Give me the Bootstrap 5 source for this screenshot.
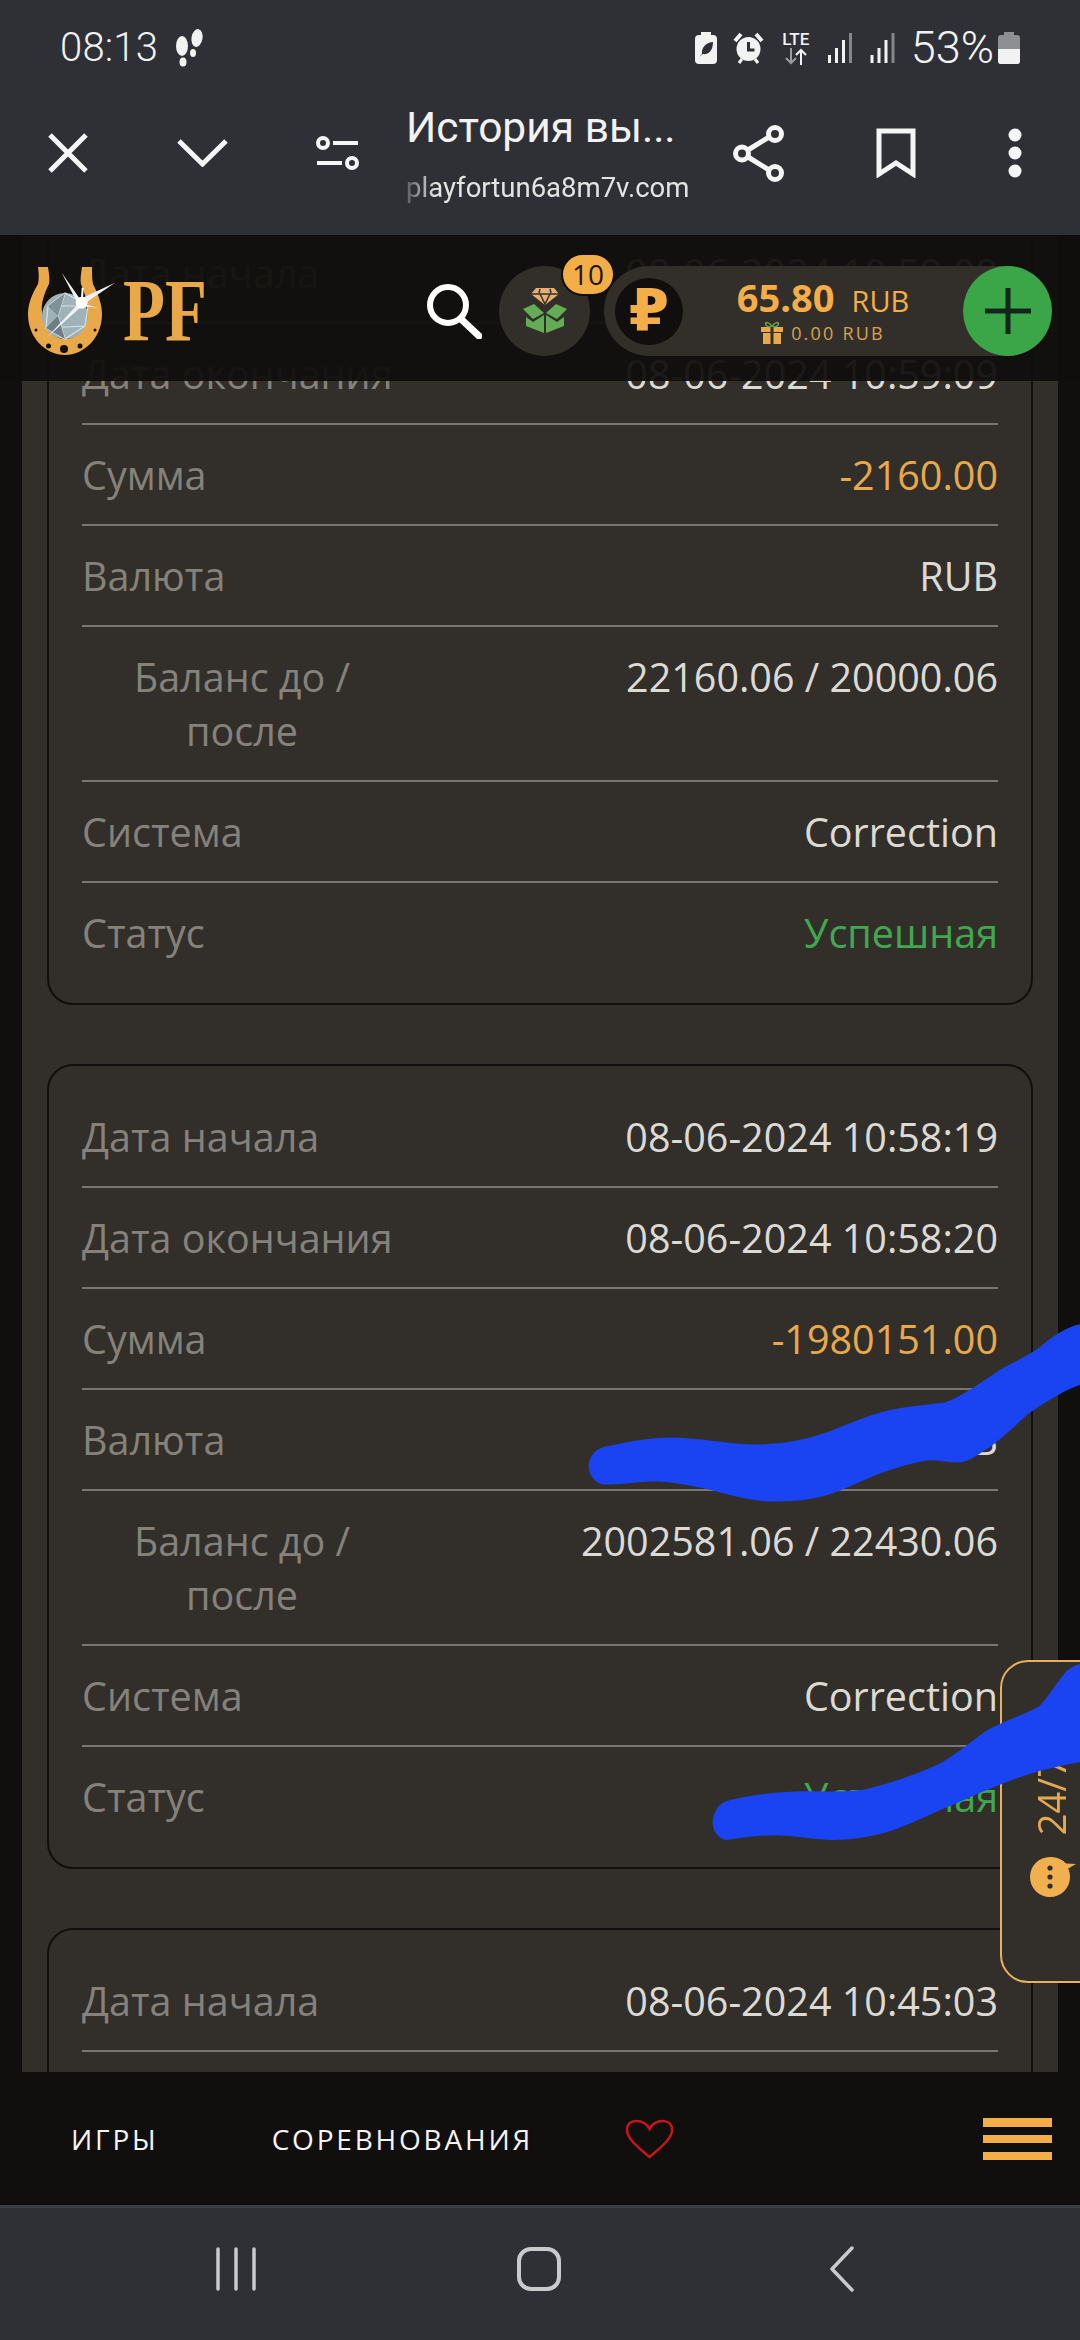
<!DOCTYPE html>
<html lang="ru">
<head>
    <meta charset="UTF-8">
    <meta name="viewport" content="width=device-width, initial-scale=1.0">
    <title>История выводов</title>
    <link href="https://cdn.jsdelivr.net/npm/bootstrap@5.3.0/dist/css/bootstrap.min.css" rel="stylesheet">
    <style>
        html, body { background: #110f0d; }
        body { width: 1080px; height: 2340px; overflow: hidden; font-family: "Open Sans", sans-serif; }
        .phone { position: relative; width: 1080px; height: 2340px; overflow: hidden; }

        /* android + browser chrome */
        .chrome { height: 235px; background: #2f3035; color: #f2f2f2; font-family: Roboto, sans-serif; }
        .status-row { height: 96px; padding: 0 60px; }
        .status-time { font-size: 40px; font-weight: 300; letter-spacing: .2px; }
        .status-pct { font-size: 45px; font-weight: 300; letter-spacing: 0; margin-left: 14px; }
        .lte-box { width: 32px; line-height: 1; }
        .lte-text { font-size: 17px; font-weight: 500; display: block; margin-bottom: -1px; }
        .tool-row { height: 114px; }
        .tool-slot { display: flex; justify-content: center; align-items: center; flex: none; }
        .slot-a { width: 135px; }
        .slot-b { width: 136px; }
        .slot-c { width: 139px; }
        .slot-d { width: 100px; }
        .title-box { width: 284px; margin-left: 1px; margin-top: 5px; overflow: hidden; }
        .page-title { font-size: 42.5px; line-height: 50px; white-space: nowrap; }
        .page-url { font-size: 27.500px; line-height: 40px; margin-top: 15px; white-space: nowrap; color: #e4e4e4; -webkit-mask-image: linear-gradient(90deg, rgba(0,0,0,.25), #000 30px); mask-image: linear-gradient(90deg, rgba(0,0,0,.25), #000 30px); }

        /* scrolled content */
        .content { height: 1837px; overflow: hidden; background: #110f0d; padding: 0 22px; }
        .panel { background: #322f2a; padding: 0 25px; margin-top: -35px; }
        .tx-card { --bs-card-bg: #322f2a; --bs-card-border-color: #110f0d; --bs-card-border-width: 2px; --bs-card-border-radius: 26px; --bs-card-inner-border-radius: 24px; padding: 21px 33px; margin-bottom: 59px; }
        .tx-list { --bs-list-group-bg: transparent; --bs-list-group-border-color: #7a7772; --bs-list-group-border-width: 2px; --bs-list-group-item-padding-x: 0; --bs-list-group-item-padding-y: 22.5px; }
        .tx-row { font-size: 39.5px; line-height: 54px; color: #dcdad5; }
        .tx-label { color: #85827c; }
        .tx-label-wrap { width: 320px; text-align: center; }
        .val-orange { color: #e8a94c; }
        .val-green { color: #41a84f; }

        /* sticky site header, sits over the list */
        .site-head { position: absolute; left: 0; top: 235px; width: 1080px; height: 146px; background: rgba(17, 15, 13, .95); padding: 6px 28px 0 28px; }
        .logo-mark { overflow: visible; flex: none; }
        .logo-pf { font-family: "Liberation Serif", serif; font-weight: 700; font-size: 88px; line-height: 1; color: #e9a94b; margin-left: 19px; transform: scaleX(.78); transform-origin: left; }
        .head-right { margin-left: auto; }
        .gift-btn { position: relative; width: 91px; height: 90px; border-radius: 50%; background: #322f2a; margin: 0 14px 0 17px; }
        .gift-count { position: absolute; left: 64px; top: -11px; width: 50px; height: 39px; border-radius: 20px; background: #f4ae47; color: #1b1610; font-size: 28px; text-align: center; line-height: 39px; box-shadow: 0 0 0 2px #110f0d; }
        .bal-pill { width: 448px; height: 90px; border-radius: 45px; background: #322f2a; padding-left: 11px; }
        .rub-coin { width: 68px; height: 67px; border-radius: 50%; background: #110f0d; color: #f4ae47; font-size: 58px; font-weight: 700; line-height: 67px; text-align: center; font-family: "DejaVu Sans", sans-serif; }
        .bal-main { color: #f4ae47; line-height: 1; }
        .bal-sum { font-size: 38px; font-weight: 700; }
        .bal-cur { font-size: 29px; margin-left: 17px; }
        .bal-bonus { color: #d9a24b; font-size: 18px; letter-spacing: 2.2px; line-height: 1; margin-top: 5px; }
        .add-btn { width: 89px; height: 90px; border-radius: 50%; background: #3aa648; flex: none; }

        /* support tab on the right edge */
        .chat-tab { position: absolute; left: 1000px; top: 1660px; width: 110px; height: 323px; background: #322f2a; border: 2px solid #e8b060; border-radius: 28px 0 0 28px; padding-bottom: 82px; }
        .chat-text { writing-mode: vertical-rl; transform: rotate(180deg); color: #e2a94f; font-size: 38px; line-height: 42px; margin: 0 0 20px 28px; }
        .chat-icon { margin-left: 28px; display: block; }

        /* site bottom menu */
        .site-foot { height: 133px; background: #110f0d; color: #f4f4f4; padding-right: 28px; }
        .foot-link { font-size: 28px; letter-spacing: 2.8px; }
        .foot-a { margin-left: 71px; }
        .foot-b { margin-left: 113px; }
        .foot-heart { margin-left: 92px; }
        .foot-burger { margin-left: auto; }

        /* android nav bar */
        .nav-strip { height: 135px; background: #2f3035; border-top: 3px solid #3c3d42; padding-bottom: 10px; }
        .nav-slot-a { margin-left: 215px; }
        .nav-slot-b { margin-left: 260px; }
        .nav-slot-c { margin-left: 268px; }

        .scribble { position: absolute; left: 0; top: 0; pointer-events: none; }
    </style>
</head>
<body>
    <div class="phone">
        <div class="chrome">
            <div class="status-row d-flex align-items-center">
                <span class="status-time">08:13</span>
                <svg class="ms-3" width="32" height="40" viewBox="0 0 32 40" fill="#f2f2f2">
                    <ellipse cx="8" cy="18" rx="6" ry="10"/><ellipse cx="9" cy="34" rx="3.5" ry="4.5"/>
                    <ellipse cx="23" cy="10" rx="5.5" ry="9" transform="rotate(10 23 10)"/><ellipse cx="19" cy="25" rx="3" ry="4"/>
                </svg>
                <div class="ms-auto d-flex align-items-center">
                    <svg width="22" height="32" viewBox="0 0 22 32"><rect x="0" y="3" width="22" height="29" rx="4" fill="#f2f2f2"/><rect x="6" y="0" width="10" height="4" fill="#f2f2f2"/><path d="M4 25 7 22C6 15 12 10 18 10 18 18 14 23 8 22" fill="#2f3035"/></svg>
                    <svg class="ms-3" width="31" height="32" viewBox="0 0 31 32"><circle cx="15.5" cy="17" r="12" fill="#f2f2f2"/><path d="M15.5 10v8h6" stroke="#2f3035" stroke-width="3" fill="none"/><path d="M2 9 8 2M29 9 23 2" stroke="#f2f2f2" stroke-width="4"/><path d="M6 31l3-4M25 31l-3-4" stroke="#f2f2f2" stroke-width="3"/></svg>
                    <div class="lte-box ms-3 text-center">
                        <span class="lte-text">LTE</span>
                        <svg width="26" height="17" viewBox="0 0 26 17" fill="none" stroke-width="2"><path d="M8 0v15M3 10l5 5 5-5" stroke="#9b9ca0"/><path d="M18 17V2M13 7l5-5 5 5" stroke="#f2f2f2"/></svg>
                    </div>
                    <svg class="ms-3" width="25" height="30" viewBox="0 0 25 30"><rect x="0" y="22" width="3" height="8" fill="#f2f2f2"/><rect x="7" y="15" width="3" height="15" fill="#f2f2f2"/><rect x="14" y="7" width="3" height="23" fill="#f2f2f2"/><rect x="21" y="0" width="3" height="30" fill="#85868a"/></svg>
                    <svg class="ms-3" width="28" height="30" viewBox="0 0 25 30"><rect x="0" y="22" width="3" height="8" fill="#f2f2f2"/><rect x="7" y="15" width="3" height="15" fill="#f2f2f2"/><rect x="14" y="7" width="3" height="23" fill="#f2f2f2"/><rect x="21" y="0" width="3" height="30" fill="#85868a"/></svg>
                    <span class="status-pct">53%</span>
                    <svg class="ms-1" width="22" height="32" viewBox="0 0 22 32"><rect x="0" y="3" width="22" height="29" rx="3" fill="#8e8f93"/><rect x="6" y="0" width="10" height="4" fill="#8e8f93"/><path d="M0 17h22v12a3 3 0 0 1-3 3H3a3 3 0 0 1-3-3z" fill="#f2f2f2"/></svg>
                </div>
            </div>
            <div class="tool-row d-flex align-items-center">
                <div class="tool-slot slot-a">
                    <svg width="40" height="40" viewBox="0 0 40 40"><path d="M2 2 38 38M38 2 2 38" stroke="#f5f5f5" stroke-width="5"/></svg>
                </div>
                <div class="tool-slot slot-a">
                    <svg width="51" height="28" viewBox="0 0 51 28" fill="none"><path d="M2 2 25.500 25 49 2" stroke="#f5f5f5" stroke-width="5"/></svg>
                </div>
                <div class="tool-slot slot-a">
                    <svg width="43" height="36" viewBox="0 0 43 36" fill="none" stroke="#f5f5f5" stroke-width="4"><circle cx="7" cy="8" r="5"/><path d="M17 8h25M1 28h25"/><circle cx="36" cy="28" r="5"/></svg>
                </div>
                <div class="title-box">
                    <div class="page-title">История вы...</div>
                    <div class="page-url">playfortun6a8m7v.com</div>
                </div>
                <div class="tool-slot slot-b">
                    <svg width="51" height="57" viewBox="0 0 51 57" fill="none" stroke="#f5f5f5" stroke-width="5"><circle cx="42" cy="9" r="6.500"/><circle cx="9" cy="28.500" r="6.500"/><circle cx="42" cy="48" r="6.500"/><path d="M15 25 36 12M15 32 36 45"/></svg>
                </div>
                <div class="tool-slot slot-c">
                    <svg width="40" height="50" viewBox="0 0 40 50" fill="none"><path d="M3 3H37V46L20 35 3 46z" stroke="#f5f5f5" stroke-width="5"/></svg>
                </div>
                <div class="tool-slot slot-d">
                    <svg width="14" height="50" viewBox="0 0 14 50" fill="#f5f5f5"><circle cx="7" cy="7" r="6.500"/><circle cx="7" cy="25" r="6.500"/><circle cx="7" cy="43" r="6.500"/></svg>
                </div>
            </div>
        </div>

        <div class="content">
            <div class="panel">
                <div class="card tx-card">
                    <ul class="list-group list-group-flush tx-list">
                        <li class="list-group-item d-flex justify-content-between tx-row"><span class="tx-label">Дата начала</span><span>08-06-2024 10:59:08</span></li>
                        <li class="list-group-item d-flex justify-content-between tx-row"><span class="tx-label">Дата окончания</span><span>08-06-2024 10:59:09</span></li>
                        <li class="list-group-item d-flex justify-content-between tx-row"><span class="tx-label">Сумма</span><span class="val-orange">-2160.00</span></li>
                        <li class="list-group-item d-flex justify-content-between tx-row"><span class="tx-label">Валюта</span><span>RUB</span></li>
                        <li class="list-group-item d-flex justify-content-between tx-row"><span class="tx-label tx-label-wrap">Баланс до / после</span><span>22160.06 / 20000.06</span></li>
                        <li class="list-group-item d-flex justify-content-between tx-row"><span class="tx-label">Система</span><span>Correction</span></li>
                        <li class="list-group-item d-flex justify-content-between tx-row"><span class="tx-label">Статус</span><span class="val-green">Успешная</span></li>
                    </ul>
                </div>
                <div class="card tx-card">
                    <ul class="list-group list-group-flush tx-list">
                        <li class="list-group-item d-flex justify-content-between tx-row"><span class="tx-label">Дата начала</span><span>08-06-2024 10:58:19</span></li>
                        <li class="list-group-item d-flex justify-content-between tx-row"><span class="tx-label">Дата окончания</span><span>08-06-2024 10:58:20</span></li>
                        <li class="list-group-item d-flex justify-content-between tx-row"><span class="tx-label">Сумма</span><span class="val-orange">-1980151.00</span></li>
                        <li class="list-group-item d-flex justify-content-between tx-row"><span class="tx-label">Валюта</span><span>RUB</span></li>
                        <li class="list-group-item d-flex justify-content-between tx-row"><span class="tx-label tx-label-wrap">Баланс до / после</span><span>2002581.06 / 22430.06</span></li>
                        <li class="list-group-item d-flex justify-content-between tx-row"><span class="tx-label">Система</span><span>Correction</span></li>
                        <li class="list-group-item d-flex justify-content-between tx-row"><span class="tx-label">Статус</span><span class="val-green">Успешная</span></li>
                    </ul>
                </div>
                <div class="card tx-card">
                    <ul class="list-group list-group-flush tx-list">
                        <li class="list-group-item d-flex justify-content-between tx-row"><span class="tx-label">Дата начала</span><span>08-06-2024 10:45:03</span></li>
                        <li class="list-group-item d-flex justify-content-between tx-row"><span class="tx-label">Дата окончания</span><span>08-06-2024 10:45:04</span></li>
                    </ul>
                </div>
            </div>
        </div>

        <div class="site-foot d-flex align-items-center">
            <span class="foot-link foot-a">ИГРЫ</span>
            <span class="foot-link foot-b">СОРЕВНОВАНИЯ</span>
            <svg class="foot-heart" width="49" height="40" viewBox="0 0 49 40" fill="none"><path d="M24.500 38C14 29 2 20 2 11 2 5 6 2 11 2c6 0 11 3 13.500 8C27 5 32 2 38 2c5 0 9 3 9 9 0 9-12 18-22.500 27z" stroke="#c8141c" stroke-width="2.500"/></svg>
            <svg class="foot-burger" width="69" height="42" viewBox="0 0 69 42" fill="#f4ae47"><rect width="69" height="9"/><rect y="17" width="69" height="8"/><rect y="34" width="69" height="8"/></svg>
        </div>

        <div class="nav-strip d-flex align-items-center">
            <svg class="nav-slot-a" width="42" height="44" viewBox="0 0 42 44" stroke="#c8cacc" stroke-width="3.500" stroke-linecap="round"><path d="M3 2V42M21 2V42M39 2V42"/></svg>
            <svg class="nav-slot-b" width="44" height="44" viewBox="0 0 44 44" fill="none"><rect x="2" y="2" width="40" height="40" rx="12" stroke="#c8cacc" stroke-width="4"/></svg>
            <svg class="nav-slot-c" width="26" height="46" viewBox="0 0 26 46" fill="none"><path d="M23 2 3 23 23 44" stroke="#c8cacc" stroke-width="3.500" stroke-linecap="round" stroke-linejoin="round"/></svg>
        </div>

        <div class="site-head d-flex align-items-center">
            <svg class="logo-mark" width="76" height="90" viewBox="0 0 76 90">
                <path d="M10 1H20C21 8 22 14 21 18 16 28 13 37 14 46 14 60 24 73 37 73 50 73 60 60 60 46 60 37 57 28 53 18 52 14 53 8 54 1H64C64 8 64 13 65 18 70 28 74 38 74 48 74 72 56 89 37 89 18 89 0 72 0 48 0 38 4 28 10 18 11 13 11 8 10 1z" fill="#e9a94b"/>
                <circle cx="37" cy="50" r="23" fill="#9fb2b8"/>
                <path d="M37 27 20 40 18 62 37 73 57 60 60 40zM37 27 30 50 37 73M20 40 60 40M18 62 57 60" fill="none" stroke="#d9e3e6" stroke-width="1.200"/>
                <path d="M30 50 18 62 37 73z" fill="#6d7e86"/><path d="M20 40 30 50 37 27z" fill="#7f9199"/>
                <g fill="#110f0d"><circle cx="36" cy="83" r="4"/><circle cx="20.500" cy="80" r="2.500"/><circle cx="52" cy="80" r="2.500"/><circle cx="8" cy="64" r="1.500"/><circle cx="67" cy="64" r="1.500"/></g>
                <path d="M33.700 6.700 52 33 87 16.700 56 38 70 41.700 54 40 18.700 71.700 50 38z" fill="#eef2f4"/>
                <circle cx="53.700" cy="36.700" r="6" fill="#fff"/>
                <path d="M54.700 21.700 53.700 36.700" stroke="#fff" stroke-width="2"/>
            </svg>
            <span class="logo-pf">PF</span>
            <div class="head-right d-flex align-items-center">
                <svg width="56" height="56" viewBox="0 0 56 56" fill="none"><circle cx="22" cy="22" r="18" stroke="#fff" stroke-width="6"/><path d="M35 36 53 53" stroke="#fff" stroke-width="7" stroke-linecap="round"/></svg>
                <div class="gift-btn d-flex align-items-center justify-content-center">
                    <svg width="46" height="46" viewBox="0 0 46 46">
                        <path d="M14 0H32L37 6 23 17 9 6z" fill="#e8b070"/><path d="M9 6H37M18 6 23 16 28 6M18 1 17 5M28 1 29 5" stroke="#322f2a" stroke-width="1.500" fill="none"/>
                        <path d="M1 21 12 16 22 25 11 31zM45 21 34 16 24 25 35 31z" fill="#64ad56"/>
                        <path d="M4 29 11 34 22 27V45L4 38zM42 29 35 34 24 27V45L42 38z" fill="#64ad56"/>
                    </svg>
                    <span class="gift-count">10</span>
                </div>
                <div class="bal-pill d-flex align-items-center">
                    <span class="rub-coin">₽</span>
                    <div class="flex-grow-1 text-center">
                        <div class="bal-main"><span class="bal-sum">65.80</span><span class="bal-cur">RUB</span></div>
                        <div class="bal-bonus d-flex justify-content-center align-items-center">
                            <svg class="me-2" width="22" height="23" viewBox="0 0 22 23" fill="#e9a94b"><path d="M0 6H22V11H0zM2 12H20V23H2z"/><path d="M11 6C8 0 3 1 5 4 6 6 9 6 11 6 13 6 16 6 17 4 19 1 14 0 11 6z" fill="none" stroke="#64ad56" stroke-width="1.500"/><rect x="9.500" y="6" width="3" height="17" fill="#322f2a"/></svg>
                            <span>0.00 RUB</span>
                        </div>
                    </div>
                    <div class="add-btn d-flex align-items-center justify-content-center">
                        <svg width="46" height="46" viewBox="0 0 46 46"><path d="M23 0V46M0 23H46" stroke="#13261a" stroke-width="5"/></svg>
                    </div>
                </div>
            </div>
        </div>

        <div class="chat-tab d-flex flex-column justify-content-end">
            <span class="chat-text">24/7</span>
            <svg class="chat-icon" width="46" height="44" viewBox="0 0 46 44"><path d="M20 2a20 20 0 1 0 20 20c0-3-.6-6-1.800-8.500L46 9l-10-.5A20 20 0 0 0 20 2z" fill="#f0b050"/><g fill="#322f2a"><circle cx="20" cy="13" r="2.600"/><circle cx="20" cy="22" r="2.600"/><circle cx="20" cy="31" r="2.600"/></g></svg>
        </div>

        <svg class="scribble" width="1080" height="2340" viewBox="0 0 1080 2340">
            <g transform="translate(540 1260) scale(.3444 .4719)" fill="#1a43f2" stroke="#1a43f2" stroke-width="8" stroke-linejoin="round">
                <path d="M145 435C150 410 175 400 200 398 260 388 320 380 380 380 470 380 540 395 630 395 700 395 770 385 830 370 890 355 940 335 1000 325 1060 312 1130 312 1180 305 1230 290 1280 265 1330 240 1370 222 1410 210 1450 190 1490 165 1530 145 1568 140L1568 260C1520 272 1470 295 1420 320 1380 345 1340 375 1300 395 1270 410 1240 425 1210 425 1180 425 1160 420 1130 420 1090 425 1050 432 1000 445 940 460 890 482 830 495 780 505 730 508 680 508 630 508 580 500 530 490 470 478 400 468 340 465 290 465 240 472 190 472 165 472 145 455 145 435z"/>
                <path d="M505 1190C510 1165 525 1155 545 1150 620 1135 690 1132 760 1130 830 1128 890 1135 950 1125 1020 1112 1090 1095 1150 1075 1200 1058 1250 1025 1300 1000 1350 980 1400 970 1450 950 1480 930 1500 900 1530 875 1545 866 1555 862 1568 860L1568 1060C1510 1068 1450 1078 1400 1090 1330 1108 1260 1130 1200 1150 1130 1170 1070 1195 1000 1210 950 1220 900 1225 850 1225 790 1225 740 1215 680 1215 630 1215 590 1220 540 1225 520 1222 505 1208 505 1190z"/>
            </g>
        </svg>
    </div>

    <script src="https://cdn.jsdelivr.net/npm/bootstrap@5.3.0/dist/js/bootstrap.bundle.min.js"></script>
</body>
</html>
